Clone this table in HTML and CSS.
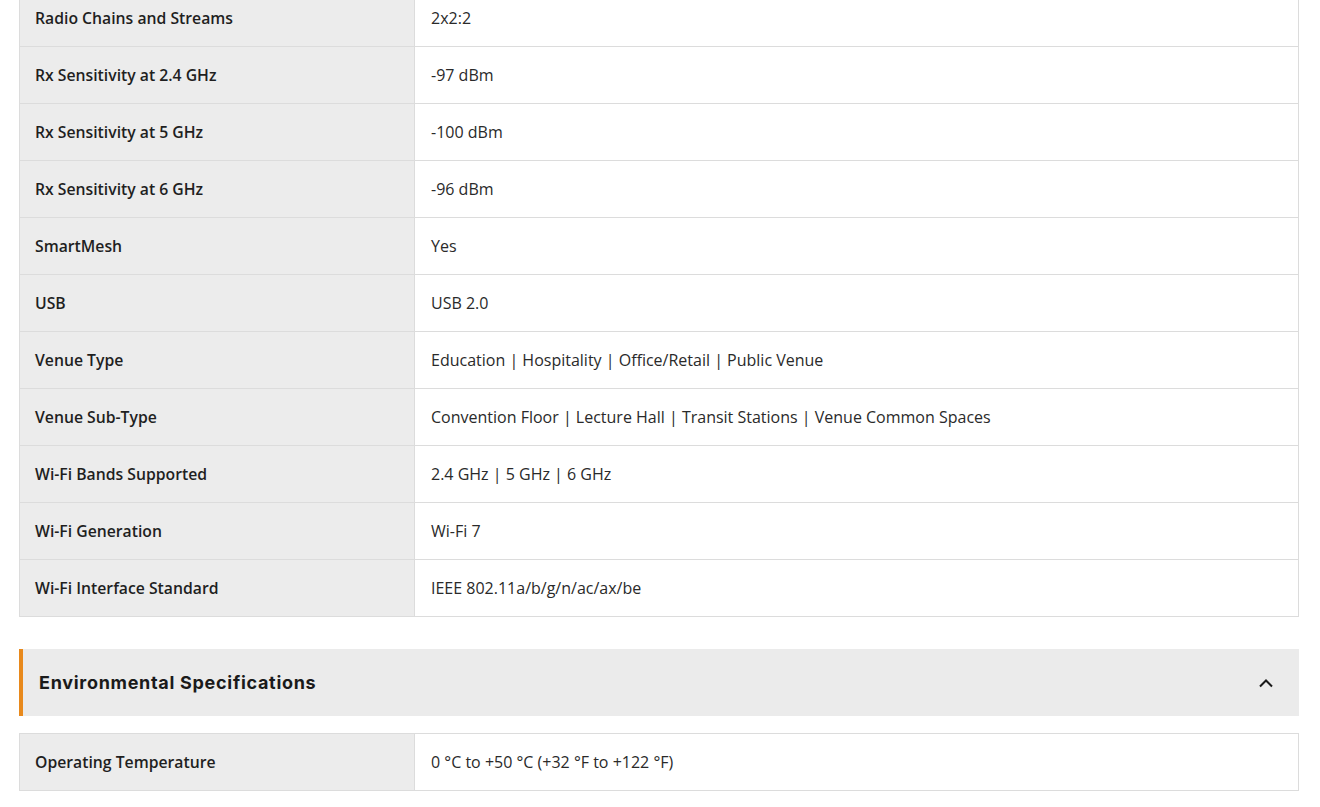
FILE: index.html
```html
<!DOCTYPE html>
<html lang="en">
<head>
  <meta charset="UTF-8" />
  <meta name="viewport" content="width=device-width,initial-scale=1.0" />
  <title>Specifications</title>
  <link rel="stylesheet" href="styles.css">
</head>
<body>
  <div class="specs">
    <table class="spec-table">
      <tr><th>Radio Chains and Streams</th><td>2x2:2</td></tr>
      <tr><th>Rx Sensitivity at 2.4 GHz</th><td>-97 dBm</td></tr>
      <tr><th>Rx Sensitivity at 5 GHz</th><td>-100 dBm</td></tr>
      <tr><th>Rx Sensitivity at 6 GHz</th><td>-96 dBm</td></tr>
      <tr><th>SmartMesh</th><td>Yes</td></tr>
      <tr><th>USB</th><td>USB 2.0</td></tr>
      <tr><th>Venue Type</th><td>Education | Hospitality | Office/Retail | Public Venue</td></tr>
      <tr><th>Venue Sub-Type</th><td>Convention Floor | Lecture Hall | Transit Stations | Venue Common Spaces</td></tr>
      <tr><th>Wi-Fi Bands Supported</th><td>2.4 GHz | 5 GHz | 6 GHz</td></tr>
      <tr><th>Wi-Fi Generation</th><td>Wi-Fi 7</td></tr>
      <tr><th>Wi-Fi Interface Standard</th><td>IEEE 802.11a/b/g/n/ac/ax/be</td></tr>
    </table>

    <div class="section-head">
      <h2>Environmental Specifications</h2>
      <svg class="chevron" width="16" height="10" viewBox="0 0 16 10">
        <path d="M2 8.5 L8 2.5 L14 8.5" fill="none" stroke="#1a1a1a" stroke-width="2"/>
      </svg>
    </div>

    <table class="spec-table">
      <tr><th>Operating Temperature</th><td>0 °C to +50 °C (+32 °F to +122 °F)</td></tr>
    </table>
  </div>
</body>
</html>
```

FILE: styles.css
```css
body {
  margin: 0;
  background: #fff;
  color: #222;
  font-family: 'Open Sans', sans-serif;
}

.specs {
  width: 1280px;
  margin: -11px 0 0 19px;
}

.spec-table {
  width: 100%;
  border-collapse: collapse;
  border: 1px solid #dcdcdc;
}

.spec-table th,
.spec-table td {
  height: 56px;
  padding: 0 16px;
  font-size: 16px;
  text-align: left;
  vertical-align: middle;
  border-bottom: 1px solid #dcdcdc;
}

.spec-table th {
  width: 363px;
  padding-left: 15px;
  background: #ececec;
  font-size: 15.75px;
  font-weight: 600;
  color: #1f1f1f;
  border-right: 1px solid #dcdcdc;
}

.spec-table td {
  color: #2a2a2a;
}

.section-head {
  display: flex;
  align-items: center;
  justify-content: space-between;
  height: 67px;
  margin: 32px 0 17px;
  padding: 0 25px 0 16px;
  background: #ebebeb;
  border-left: 4px solid #e8891c;
}

.section-head h2 {
  margin: 0;
  font-family: 'Inter', sans-serif;
  font-size: 18px;
  font-weight: 700;
  letter-spacing: 0.7px;
  color: #1a1a1a;
}
```
